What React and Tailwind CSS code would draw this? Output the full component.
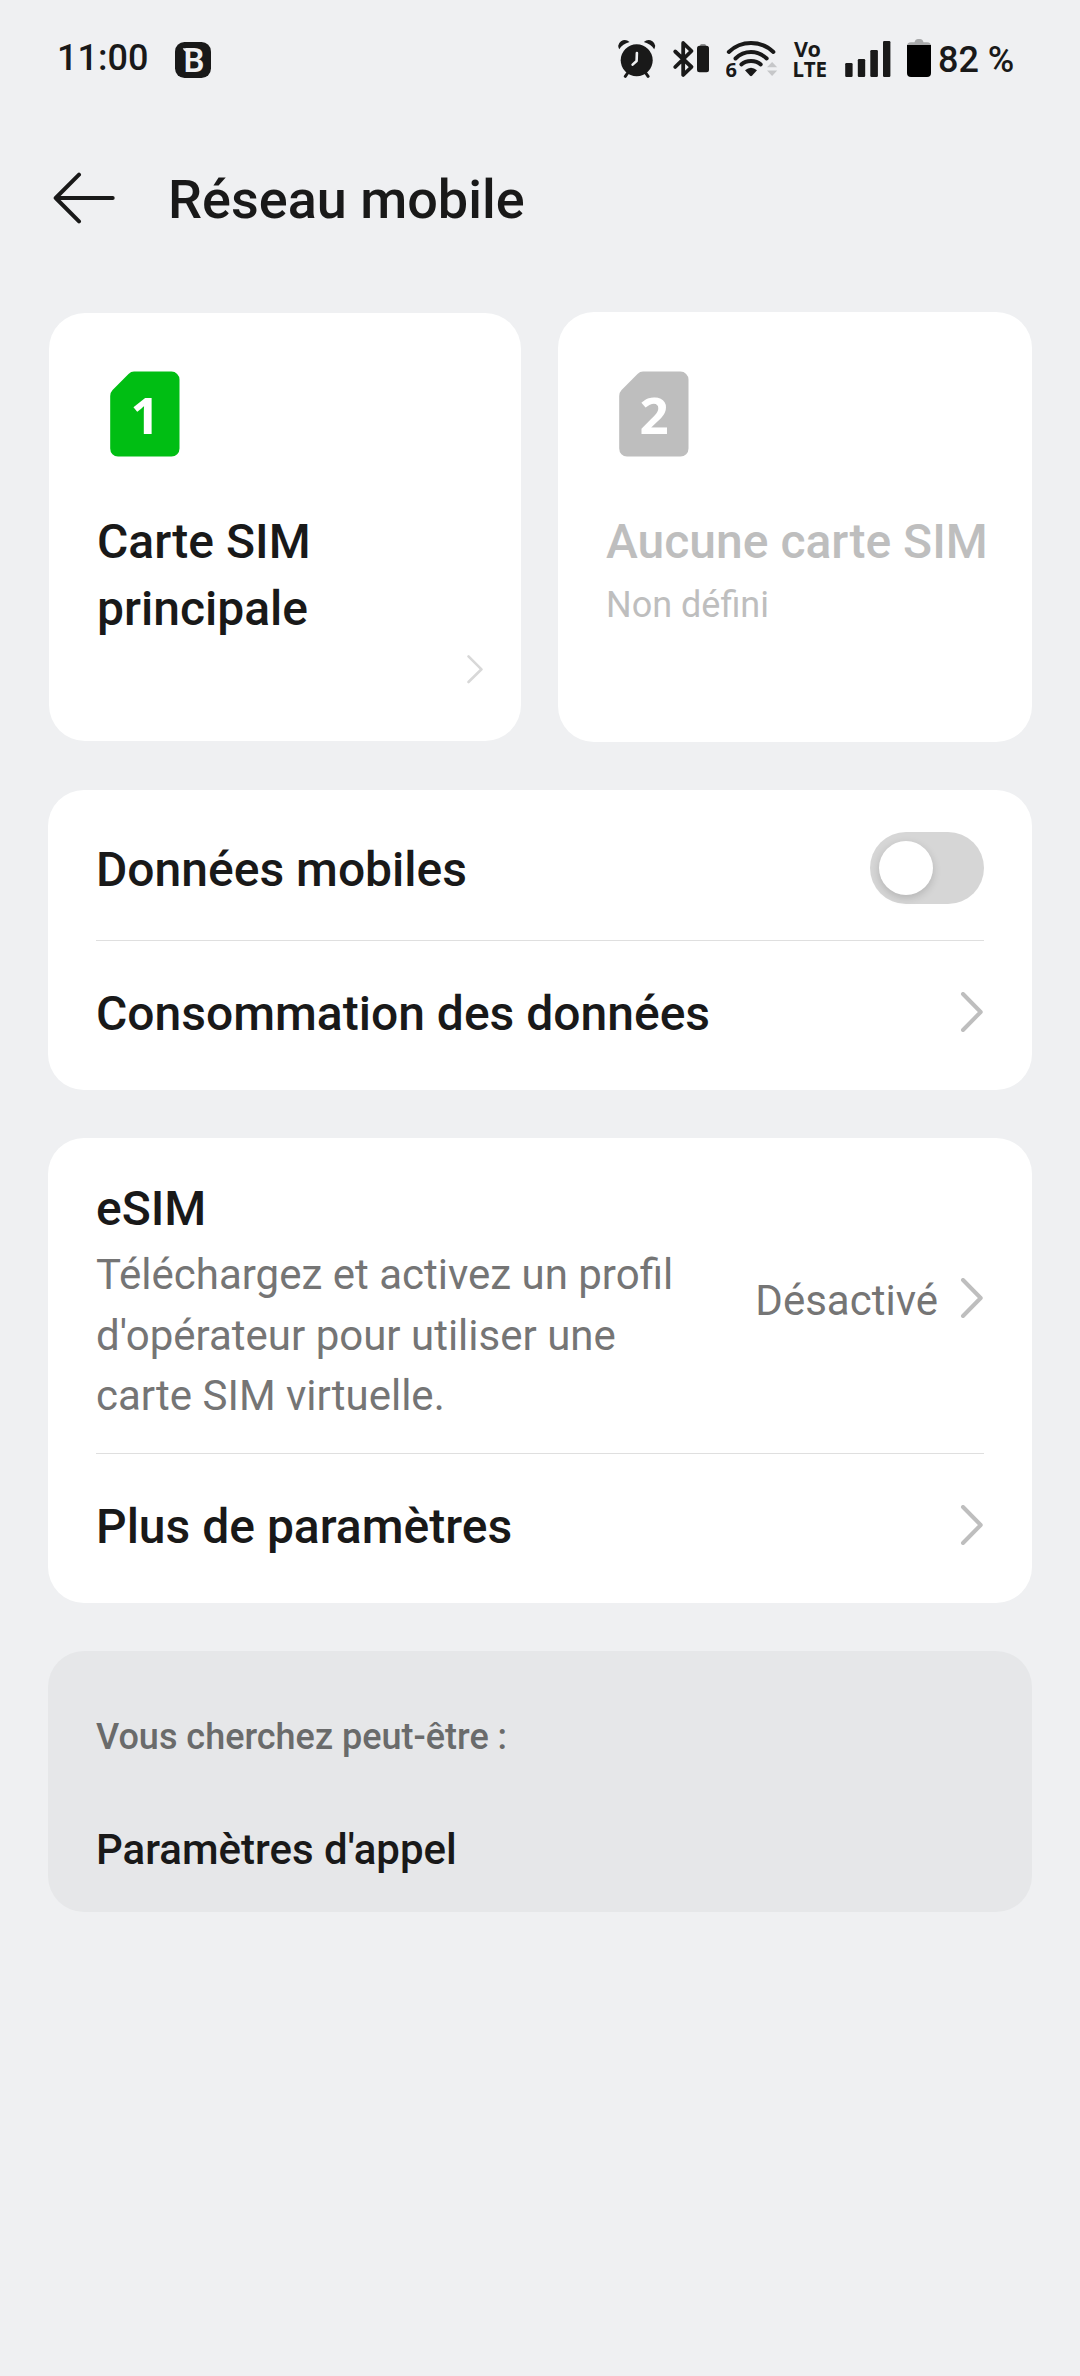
function Chevron({ className = "" }) {
  return (
    <svg className={`h-10 w-6 shrink-0 ${className}`} viewBox="0 0 24 40" fill="none" stroke="#bebebe" strokeWidth="4" strokeLinecap="round" strokeLinejoin="round">
      <path d="M3 2 L20.7 20 L3 38" />
    </svg>
  );
}

function SimIcon({ digit, color }) {
  return (
    <svg className="ml-[13px] h-[86px] w-[70px]" viewBox="0 0 70 86">
      <path d="M24 .6 H61.5 A8 8 0 0 1 69.5 8.6 V77.5 A8 8 0 0 1 61.5 85.6 H8 A8 8 0 0 1 .2 77.5 V25 Q.2 21.5 2.6 19 L18.5 3 Q21 .6 24 .6 Z" fill={color} />
      <text x="35" y="63.3" textAnchor="middle" fontSize="51" fontWeight="700" fill="#fff" fontFamily="'Noto Sans', 'Open Sans', sans-serif">
        {digit}
      </text>
    </svg>
  );
}

function StatusBar() {
  return (
    <div className="flex h-[120px] items-start text-[#191919]">
      <span className="ml-[9px] mt-[31px] w-[118px] whitespace-nowrap text-[36px] font-medium leading-[54px]">11:00</span>
      <svg className="mt-[42px] h-9 w-9" viewBox="0 0 36 36">
        <rect width="36" height="36" rx="9.5" fill="#191919" />
        <path d="M7.8 6.3 H14 V9.5 H10.5 Q8.6 9 7.8 6.3 Z" fill="#eff0f2" />
        <text x="8.4" y="30" fontSize="33" fontWeight="600" fill="#eff0f2" fontFamily="Roboto, sans-serif">B</text>
      </svg>
      <div className="ml-[407px] mt-[38px] flex h-10">
        {/* Alarm clock */}
        <svg className="h-10 w-[38px]" viewBox="618 38 38 40" fill="#191919">
          <circle cx="636.7" cy="60.3" r="16" />
          <path d="M619.2 49.2 Q616.5 44.5 621 41.2 Q625.5 38.6 629.6 42 Q622.5 44 619.2 49.2 Z" />
          <path d="M654.2 49.2 Q656.9 44.5 652.4 41.2 Q647.9 38.6 643.8 42 Q650.9 44 654.2 49.2 Z" />
          <path d="M628 72.5 L625.3 76.3 M645.4 72.5 L648.1 76.3" stroke="#191919" strokeWidth="3" strokeLinecap="round" />
          <path d="M636.9 53 L636.6 61 L632.6 64.6" fill="none" stroke="#eff0f2" strokeWidth="2.6" strokeLinecap="round" strokeLinejoin="round" />
        </svg>
        {/* Bluetooth with device battery */}
        <svg className="ml-4 h-10 w-[38px]" viewBox="672 38 38 40" fill="none">
          <path d="M675.2 51.5 L691.5 67 L683.2 75 V43 L691.5 51 L675.2 67" stroke="#191919" strokeWidth="3.8" strokeLinecap="round" strokeLinejoin="round" />
          <rect x="700" y="44" width="6" height="5" rx="1.5" fill="#8f9092" />
          <rect x="697" y="45.7" width="12" height="26.6" rx="2.5" fill="#191919" />
        </svg>
        {/* Wi-Fi 6 */}
        <svg className="ml-4 h-10 w-[52px]" viewBox="726 38 52 40" fill="none">
          <g stroke="#191919" strokeWidth="3.9" strokeLinecap="round">
            <path d="M728.8 52 Q738 43 751 43 Q764 43 773.4 52" />
            <path d="M735.5 58.5 Q742 52 751 52 Q760 52 766.7 58.5" />
            <path d="M741.3 64.5 Q745 61 751 61 Q757 61 760.8 64.5" />
          </g>
          <path d="M745 70.3 Q751 65 757 70.3 L752 75.7 Q751 76.6 750 75.7 Z" fill="#191919" />
          <text x="725.6" y="77" fontSize="20" fontWeight="700" fill="#191919" fontFamily="'Noto Sans', sans-serif">6</text>
          <path d="M767 67.3 L772.1 62 L777.2 67.3 Z M767 70.6 H777.2 L772.1 76 Z" fill="#c6c7c9" />
        </svg>
        {/* Voice over LTE */}
        <svg className="ml-3.5 h-10 w-9" viewBox="792 38 36 40" fill="#191919" fontFamily="'Noto Sans', sans-serif" fontWeight="700">
          <text x="794" y="57" fontSize="21.5" textLength="27" lengthAdjust="spacingAndGlyphs">Vo</text>
          <text x="792.6" y="76.6" fontSize="21.5" textLength="34.5" lengthAdjust="spacingAndGlyphs">LTE</text>
        </svg>
        {/* Signal strength */}
        <svg className="ml-[17px] h-10 w-[46px]" viewBox="845 38 46 40" fill="#191919">
          <rect x="845.2" y="63" width="7.4" height="14" rx="1.2" />
          <rect x="857.8" y="59" width="7.4" height="18" rx="1.2" />
          <rect x="870.3" y="50" width="7.6" height="27" rx="1.2" />
          <rect x="883" y="41" width="7.4" height="36" rx="1.2" />
        </svg>
        {/* Battery */}
        <svg className="ml-4 h-10 w-6" viewBox="907 38 24 40">
          <path d="M907 49 V46 Q907 42.2 911 42.2 H914.5 Q915.5 39 918 39 H920 Q922.5 39 923.5 42.2 H927 Q931 42.2 931 46 V49 Z" fill="#a9aaab" />
          <path d="M907 45 H931 V73 Q931 77 927 77 H911 Q907 77 907 73 Z" fill="#000" />
        </svg>
      </div>
      <span className="ml-[7px] mt-[33px] whitespace-nowrap text-[36px] font-medium leading-[54px]">82 %</span>
    </div>
  );
}

export default function App() {
  return (
    <div className="flex h-[2376px] w-[1080px] flex-col overflow-hidden bg-[#eff0f2] px-12 font-['Roboto',sans-serif] text-[#191919]">
      <StatusBar />

      <header className="flex h-48 items-start">
        <svg className="ml-[5px] mt-[52px] h-[52px] w-[63px]" viewBox="0 0 63 52" fill="none" stroke="#191919" strokeWidth="4" strokeLinecap="round" strokeLinejoin="round">
          <path d="M26 2.7 L2.7 26 L26 49.4 M2.7 26 H59.7" />
        </svg>
        <h1 className="ml-[52px] mt-[43px] text-[54px] font-medium leading-[73px]">Réseau mobile</h1>
      </header>

      <section className="flex justify-between">
        <div className="ml-px mt-px flex h-[428px] w-[472px] flex-col rounded-[36px] bg-white pl-12 pt-[58px]">
          <SimIcon digit="1" color="#00be13" />
          <p className="mt-[51px] text-[48px] font-medium leading-[67px]">
            Carte SIM
            <br />
            principale
          </p>
          <svg className="mr-9 mt-[11px] h-8 w-5 self-end" viewBox="0 0 20 32" fill="none" stroke="#d8d8d8" strokeWidth="2.6" strokeLinecap="round" strokeLinejoin="round">
            <path d="M3.5 3.3 L16.5 16.3 L3.5 29" />
          </svg>
        </div>
        <div className="flex h-[430px] w-[474px] flex-col rounded-[36px] bg-white pl-12 pt-[59px] text-[#bebebe]">
          <SimIcon digit="2" color="#bebebe" />
          <p className="mt-[51px] whitespace-nowrap text-[48px] font-medium leading-[67px]">Aucune carte SIM</p>
          <p className="mt-[3px] text-[36px] leading-[54px]">Non défini</p>
        </div>
      </section>

      <section className="mt-12 h-[300px] rounded-[36px] bg-white px-12">
        <div className="flex h-[151px] items-start justify-between border-b border-[#dfdfdf]">
          <span className="mt-[47px] text-[48px] font-medium leading-[65px]">Données mobiles</span>
          <div role="switch" aria-checked="false" className="mt-[42px] flex h-[72px] w-[114px] items-center rounded-full bg-[#d6d6d6] px-[9px]">
            <div className="size-[54px] rounded-full bg-white shadow-[0_3px_9px_rgba(0,0,0,0.16)]" />
          </div>
        </div>
        <div className="flex items-start justify-between">
          <span className="mt-10 text-[48px] font-medium leading-[65px]">Consommation des données</span>
          <Chevron className="mt-[51px]" />
        </div>
      </section>

      <section className="mt-12 h-[465px] rounded-[36px] bg-white px-12">
        <div className="flex h-[316px] items-start border-b border-[#dfdfdf]">
          <div className="mt-[38px] w-[600px]">
            <h2 className="text-[48px] font-medium leading-[65px]">eSIM</h2>
            <p className="mt-1 text-[42px] leading-[60.5px] text-[#757575]">
              Téléchargez et activez un profil
              <br />
              d'opérateur pour utiliser une
              <br />
              carte SIM virtuelle.
            </p>
          </div>
          <span className="ml-auto mt-[132px] text-[42px] leading-[61px] text-[#757575]">Désactivé</span>
          <Chevron className="ml-[22px] mt-[140px]" />
        </div>
        <div className="flex items-start justify-between">
          <span className="mt-10 text-[48px] font-medium leading-[65px]">Plus de paramètres</span>
          <Chevron className="mt-[51px]" />
        </div>
      </section>

      <section className="mt-12 h-[261px] rounded-[36px] bg-[#e6e7e9] px-12 pt-[59px]">
        <p className="text-[36px] font-medium leading-[54px] text-[#6a6b6b]">Vous cherchez peut-être :</p>
        <p className="mt-[55px] text-[42px] font-medium leading-[61px]">Paramètres d'appel</p>
      </section>
    </div>
  );
}
